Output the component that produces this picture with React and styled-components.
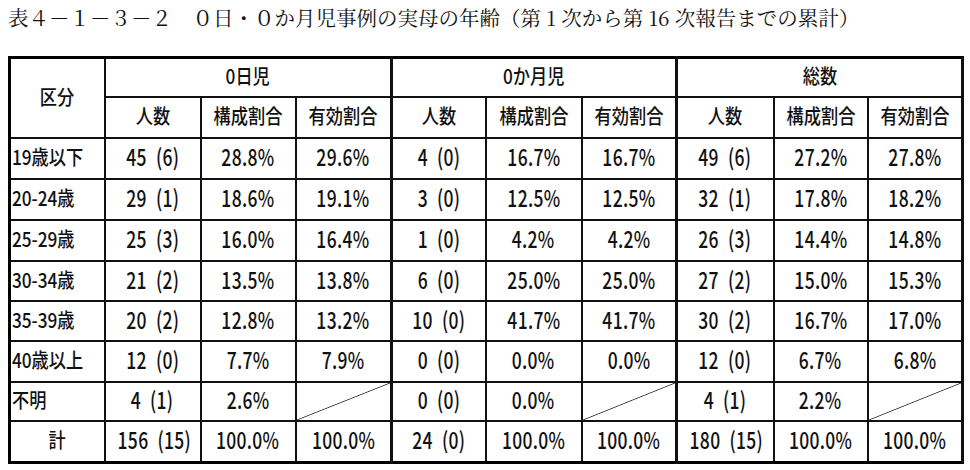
import React from "react";
import styled, { createGlobalStyle } from "styled-components";

const GlobalStyle = createGlobalStyle`
  html, body {
    margin: 0;
    background: #fff;
  }
  body {
    width: 970px;
    height: 470px;
    overflow: hidden;
  }
`;

const Page = styled.div`
  padding: 5px 0 0 8px;
`;

const Title = styled.h1`
  margin: 0;
  height: 24px;
  font-family: "Noto Serif CJK JP", "Liberation Serif", "Noto Sans CJK JP", serif;
  font-weight: normal;
  font-size: 20.5px;
  line-height: 24px;
  color: #111;
  white-space: nowrap;
`;

const Table = styled.table`
  margin-top: 27px;
  width: 953px;
  border-collapse: collapse;
  table-layout: fixed;
  border: 3px solid #000;
  font-family: "Noto Sans CJK JP", sans-serif;
  font-weight: 500;
  color: #111;
`;

const Col = styled.col`
  width: ${(p) => p.$w}px;
`;

const Row = styled.tr`
  height: ${(p) => p.$h}px;
`;

const Cell = styled.td`
  padding: 0 0 0 ${(p) => (p.$left ? 1 : 0)}px;
  border: 2px solid #111;
  border-right-width: ${(p) => (p.$sep ? 3 : 2)}px;
  text-align: ${(p) => (p.$left ? "left" : "center")};
  vertical-align: middle;
  white-space: nowrap;
  background: ${(p) =>
    p.$diag
      ? "linear-gradient(to bottom right, transparent calc(50% - 0.8px), #333 50%, transparent calc(50% + 0.8px))"
      : "transparent"};
`;

// text in the source is a narrow gothic, so squeeze it horizontally
const Txt = styled.span`
  display: inline-block;
  font-size: ${(p) => (p.$num ? 23 : 20)}px;
  line-height: 1;
  letter-spacing: ${(p) => (p.$num ? 0.4 : 0)}px;
  transform: scaleX(${(p) => (p.$num ? 0.76 : 0.86)});
  transform-origin: ${(p) => (p.$left ? "left" : "center")} center;
`;

const widths = [95, 96, 95, 96, 94, 96, 95, 97, 94, 95];
const groups = ["0日児", "0か月児", "総数"];
const subs = ["人数", "構成割合", "有効割合"];

const n = (a, b) => `${a}\u2002(${b})`;

const rows = [
  ["19歳以下", n(45, 6), "28.8%", "29.6%", n(4, 0), "16.7%", "16.7%", n(49, 6), "27.2%", "27.8%"],
  ["20-24歳", n(29, 1), "18.6%", "19.1%", n(3, 0), "12.5%", "12.5%", n(32, 1), "17.8%", "18.2%"],
  ["25-29歳", n(25, 3), "16.0%", "16.4%", n(1, 0), "4.2%", "4.2%", n(26, 3), "14.4%", "14.8%"],
  ["30-34歳", n(21, 2), "13.5%", "13.8%", n(6, 0), "25.0%", "25.0%", n(27, 2), "15.0%", "15.3%"],
  ["35-39歳", n(20, 2), "12.8%", "13.2%", n(10, 0), "41.7%", "41.7%", n(30, 2), "16.7%", "17.0%"],
  ["40歳以上", n(12, 0), "7.7%", "7.9%", n(0, 0), "0.0%", "0.0%", n(12, 0), "6.7%", "6.8%"],
  ["不明", n(4, 1), "2.6%", null, n(0, 0), "0.0%", null, n(4, 1), "2.2%", null],
  ["計", n(156, 15), "100.0%", "100.0%", n(24, 0), "100.0%", "100.0%", n(180, 15), "100.0%", "100.0%"],
];
const rowHeights = [41, 41, 41, 40, 40, 41, 39, 42];

export default function App() {
  return (
    <Page>
      <GlobalStyle />
      <Title>
        表４－１－３－２　０日・０か月児事例の実母の年齢（第 1 次から第 16 次報告までの累計）
      </Title>
      <Table>
        <colgroup>
          {widths.map((w, i) => (
            <Col key={i} $w={w} />
          ))}
        </colgroup>
        <thead>
          <Row $h={39}>
            <Cell rowSpan={2}>
              <Txt>区分</Txt>
            </Cell>
            {groups.map((g) => (
              <Cell key={g} colSpan={3} $sep>
                <Txt>{g}</Txt>
              </Cell>
            ))}
          </Row>
          <Row $h={41}>
            {groups.map((g) =>
              subs.map((s, j) => (
                <Cell key={g + s} $sep={j === 2}>
                  <Txt>{s}</Txt>
                </Cell>
              ))
            )}
          </Row>
        </thead>
        <tbody>
          {rows.map((r, i) => {
            const total = r[0] === "計";
            return (
              <Row key={r[0]} $h={rowHeights[i]}>
                <Cell $left={!total}>
                  <Txt $left={!total}>{r[0]}</Txt>
                </Cell>
                {r.slice(1).map((v, j) => (
                  <Cell key={j} $sep={j % 3 === 2} $diag={v === null}>
                    {v !== null && <Txt $num>{v}</Txt>}
                  </Cell>
                ))}
              </Row>
            );
          })}
        </tbody>
      </Table>
    </Page>
  );
}
